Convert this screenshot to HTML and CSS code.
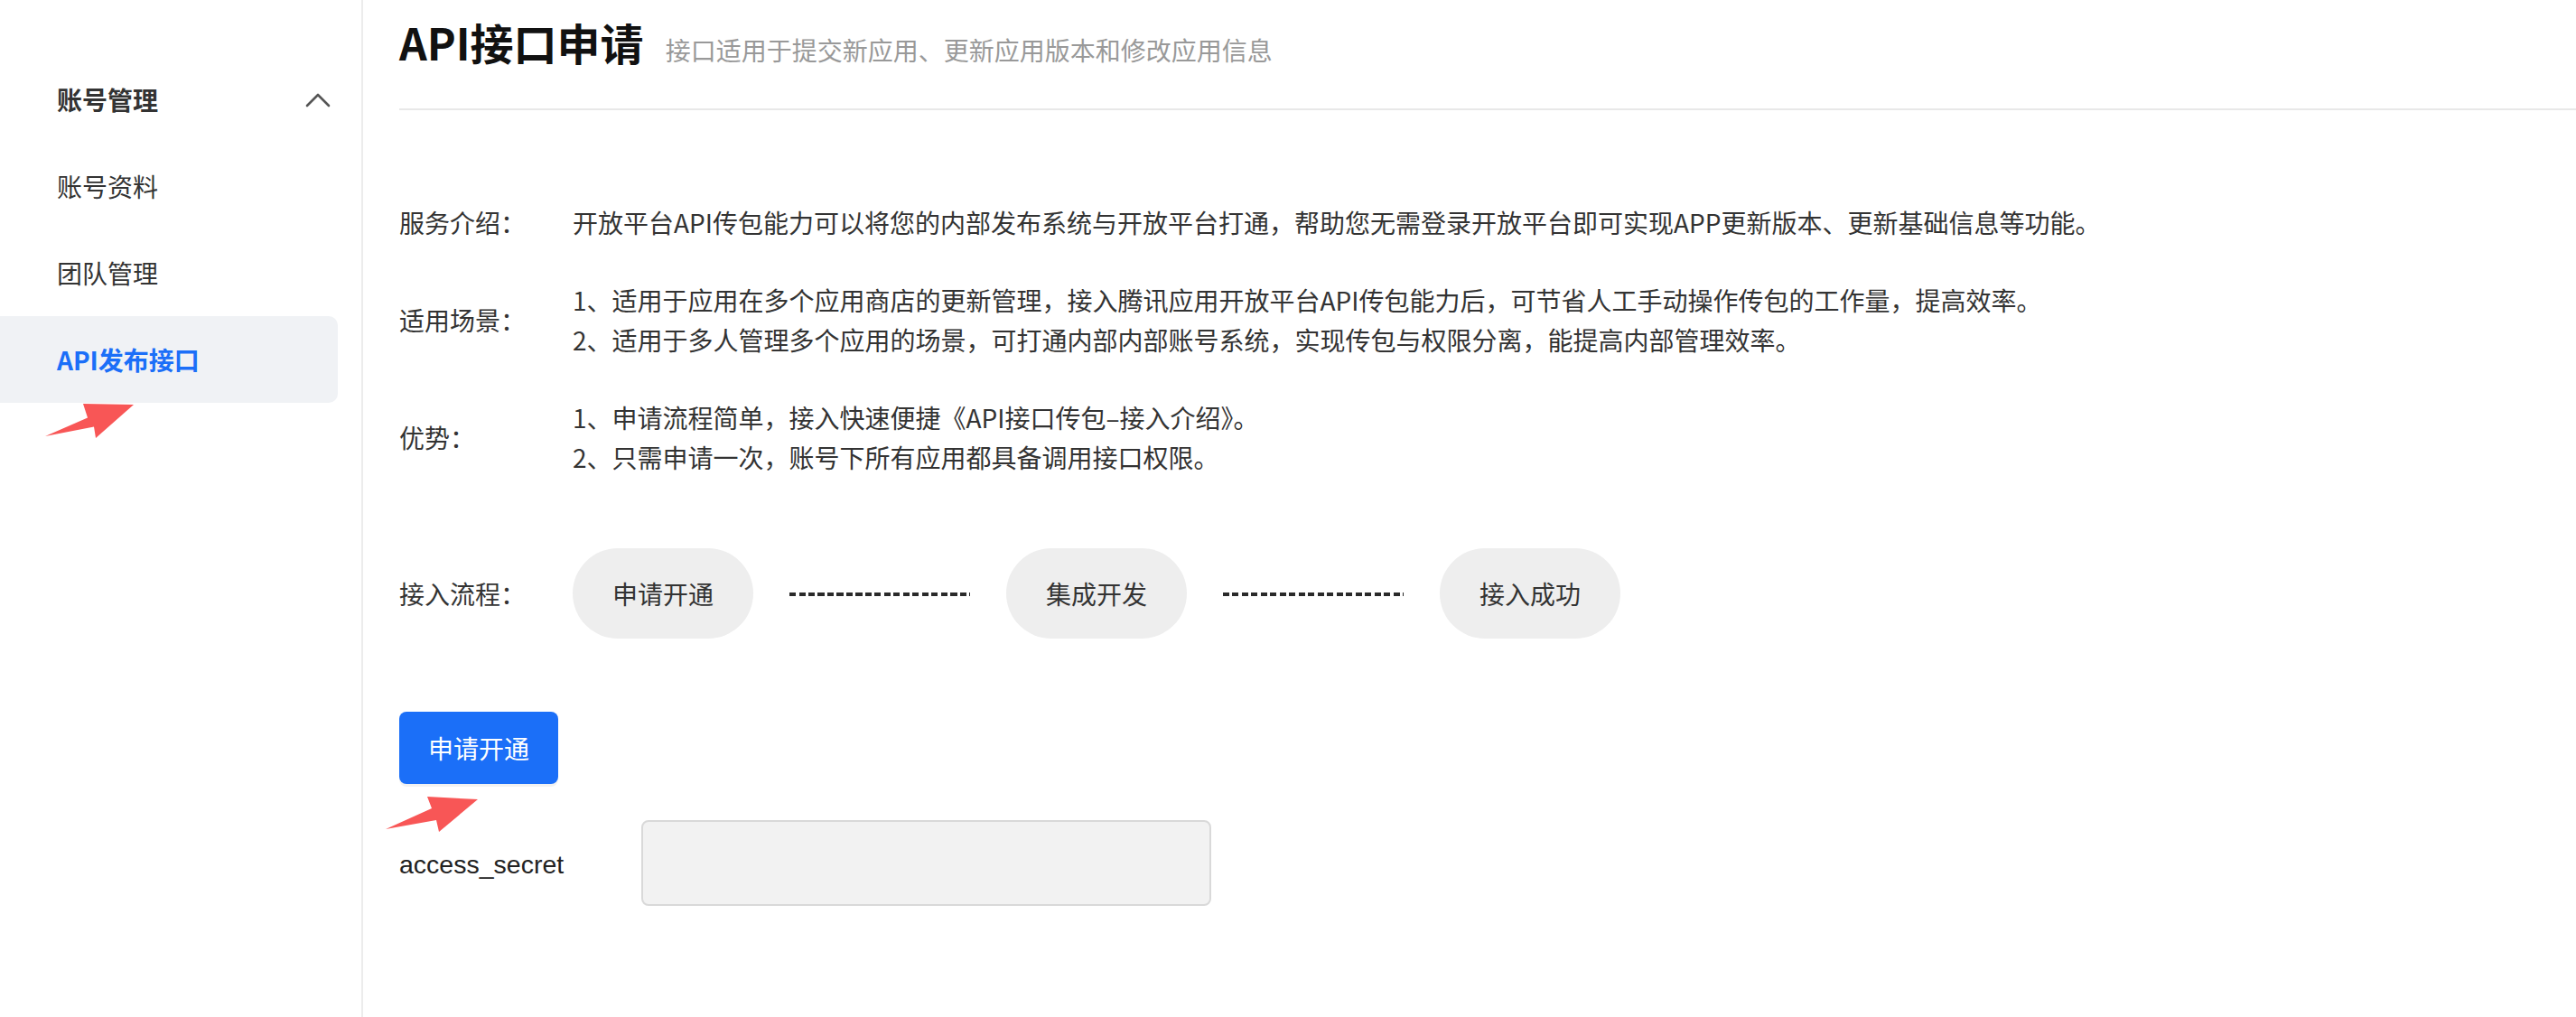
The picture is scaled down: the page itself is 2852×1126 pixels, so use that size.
FILE: index.html
```html
<!DOCTYPE html>
<html lang="zh-CN">
<head>
<meta charset="utf-8">
<title>API接口申请</title>
<link rel="stylesheet" href="styles.css">
</head>
<body>
<div class="page">
  <aside class="sidebar">
    <nav class="nav">
      <div class="nav-title">
        <span>账号管理</span>
        <svg class="chev" width="28" height="16" viewBox="0 0 28 16"><polyline points="2,14 14,2 26,14" fill="none" stroke="#555" stroke-width="2.6" stroke-linecap="round" stroke-linejoin="round"/></svg>
      </div>
      <div class="nav-item">账号资料</div>
      <div class="nav-item">团队管理</div>
      <div class="nav-item active">API发布接口</div>
    </nav>
  </aside>
  <main class="main">
    <header class="head">
      <h1 class="title">API接口申请</h1>
      <span class="sub">接口适用于提交新应用、更新应用版本和修改应用信息</span>
    </header>
    <section class="info">
      <div class="row">
        <div class="label">服务介绍：</div>
        <div class="val">开放平台API传包能力可以将您的内部发布系统与开放平台打通，帮助您无需登录开放平台即可实现APP更新版本、更新基础信息等功能。</div>
      </div>
      <div class="row">
        <div class="label">适用场景：</div>
        <div class="val">
          <div>1、适用于应用在多个应用商店的更新管理，接入腾讯应用开放平台API传包能力后，可节省人工手动操作传包的工作量，提高效率。</div>
          <div>2、适用于多人管理多个应用的场景，可打通内部内部账号系统，实现传包与权限分离，能提高内部管理效率。</div>
        </div>
      </div>
      <div class="row">
        <div class="label">优势：</div>
        <div class="val">
          <div>1、申请流程简单，接入快速便捷《API接口传包–接入介绍》。</div>
          <div>2、只需申请一次，账号下所有应用都具备调用接口权限。</div>
        </div>
      </div>
    </section>
    <div class="flow">
      <div class="label">接入流程：</div>
      <div class="pill">申请开通</div>
      <div class="dash"></div>
      <div class="pill">集成开发</div>
      <div class="dash"></div>
      <div class="pill">接入成功</div>
    </div>
    <button class="btn" type="button">申请开通</button>
    <div class="secret">
      <span class="secret-label">access_secret</span>
      <div class="secret-input"></div>
    </div>
  </main>
</div>
<svg class="marks" width="2852" height="1126" viewBox="0 0 2852 1126">
  <polygon points="50,483 97,462.5 92,447 148,448 106,485 104,472.5" fill="#f85656"/>
  <polygon points="427,918 478,895 473,882 529,885 486,921 483,908" fill="#f85656"/>
</svg>
</body>
</html>
```

FILE: styles.css
```css
* { box-sizing: border-box; }

html, body {
  margin: 0;
  padding: 0;
  background: #fff;
}

body {
  font-family: "Noto Sans CJK SC", "Liberation Sans", sans-serif;
  color: #333;
  position: relative;
  width: 2852px;
  height: 1126px;
  overflow: hidden;
}

.page {
  display: flex;
  height: 1126px;
}

.sidebar {
  width: 402px;
  flex: none;
  border-right: 2px solid #ececec;
  padding-top: 62px;
}

.nav {
  width: 374px;
  display: flex;
  flex-direction: column;
}

.nav-title,
.nav-item {
  height: 96px;
  display: flex;
  align-items: center;
  padding-left: 63px;
  font-size: 28px;
  color: #333;
}

.nav-title {
  justify-content: space-between;
  padding-right: 8px;
  font-weight: 600;
}

.chev {
  display: block;
  margin-top: 2px;
}

.nav-item.active {
  background: #f0f2f5;
  border-radius: 0 10px 10px 0;
  color: #1b6ff8;
  font-weight: 600;
}

.main {
  flex: 1;
  padding-left: 40px;
}

.head {
  height: 122px;
  display: flex;
  align-items: baseline;
  border-bottom: 2px solid #e8e8e8;
}

.title {
  margin: 0;
  font-size: 48px;
  line-height: 92px;
  font-weight: 700;
  color: #111;
}

.sub {
  margin-left: 24px;
  font-size: 28px;
  color: #999;
}

.info {
  margin-top: 102px;
  display: flex;
  flex-direction: column;
  gap: 42px;
}

.row {
  display: grid;
  grid-template-columns: 192px 1fr;
  align-items: center;
  font-size: 28px;
  line-height: 44px;
}

.label {
  color: #333;
  font-size: 28px;
  line-height: 44px;
}

.val {
  color: #333;
}

.flow {
  margin-top: 79px;
  display: flex;
  align-items: center;
  font-size: 28px;
}

.flow .label {
  width: 192px;
  flex: none;
}

.pill {
  width: 200px;
  height: 100px;
  border-radius: 50px;
  background: #eeeeee;
  display: flex;
  align-items: center;
  justify-content: center;
  color: #333;
  flex: none;
}

.dash {
  width: 200px;
  height: 4px;
  margin: 2px 40px 0;
  flex: none;
  background: repeating-linear-gradient(to right, #2a2a2a 0 7px, transparent 7px 10.5px);
}

.btn {
  display: block;
  margin-top: 81px;
  width: 176px;
  height: 80px;
  border: none;
  border-radius: 8px;
  background: #1b6ff8;
  color: #fff;
  font-family: "Noto Sans CJK SC", sans-serif;
  font-size: 28px;
  padding: 0;
  box-shadow: 0 3px 0 rgba(0, 0, 0, 0.05);
}

.secret {
  margin-top: 40px;
  display: flex;
  align-items: center;
}

.secret-label {
  width: 268px;
  flex: none;
  font-family: "Liberation Sans", Arial, sans-serif;
  font-size: 28.5px;
  color: #222;
  padding-top: 3px;
}

.secret-input {
  width: 631px;
  height: 95px;
  border: 2px solid #d9d9d9;
  border-radius: 8px;
  background: #f2f2f2;
}

.marks {
  position: absolute;
  top: 0;
  left: 0;
  pointer-events: none;
}
```
